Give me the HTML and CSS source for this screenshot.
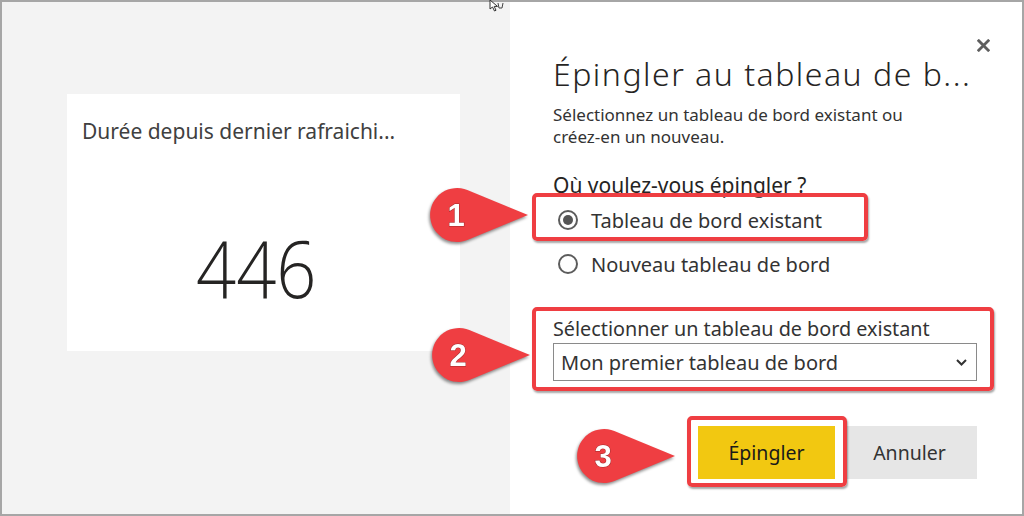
FILE: index.html
```html
<!DOCTYPE html>
<html lang="fr">
<head>
<meta charset="utf-8">
<title>Épingler au tableau de bord</title>
<link rel="stylesheet" href="styles.css">
</head>
<body>
<div class="frame">
  <div class="canvas">
    <div class="card">
      <div class="card-title">Durée depuis dernier rafraichi...</div>
      <div class="card-value">446</div>
    </div>
  </div>
  <div class="dialog">
    <div class="close-row">
      <svg class="close" width="13" height="13" viewBox="0 0 13 13"><path d="M1.8 1.8 L11.2 11.2 M11.2 1.8 L1.8 11.2" stroke="#5f5f5f" stroke-width="2.8" stroke-linecap="square"/></svg>
    </div>
    <h1 class="title">Épingler au tableau de b...</h1>
    <p class="subtitle">Sélectionnez un tableau de bord existant ou<br>créez-en un nouveau.</p>
    <div class="question">Où voulez-vous épingler ?</div>
    <div class="radio-list">
      <div class="radio"><span class="dot checked"></span><span>Tableau de bord existant</span></div>
      <div class="radio"><span class="dot"></span><span>Nouveau tableau de bord</span></div>
    </div>
    <div class="field">
      <div class="field-label">Sélectionner un tableau de bord existant</div>
      <div class="select">
        <span>Mon premier tableau de bord</span>
        <svg class="chevron" width="11" height="7" viewBox="0 0 11 7"><path d="M1 1 L5.5 5.5 L10 1" fill="none" stroke="#333" stroke-width="2"/></svg>
      </div>
    </div>
    <div class="actions">
      <div class="btn primary">Épingler</div>
      <div class="btn secondary">Annuler</div>
    </div>
  </div>

  <div class="hl hl1"></div>
  <div class="hl hl2"></div>
  <div class="hl hl3"></div>

  <svg class="callout c1" width="106" height="66" viewBox="0 0 106 66"><path d="M40.3 7 L101 32 L40.3 57 A27 27 0 1 1 40.3 7 Z" fill="#ef3e42"/><text x="29" y="43" class="num">1</text></svg>
  <svg class="callout c2" width="106" height="66" viewBox="0 0 106 66"><path d="M40.3 7 L101 32 L40.3 57 A27 27 0 1 1 40.3 7 Z" fill="#ef3e42"/><text x="29" y="43" class="num">2</text></svg>
  <svg class="callout c3" width="106" height="66" viewBox="0 0 106 66"><path d="M40.3 7 L101 32 L40.3 57 A27 27 0 1 1 40.3 7 Z" fill="#ef3e42"/><text x="29" y="43" class="num">3</text></svg>

  <svg class="cursor" width="16" height="12" viewBox="0 0 16 12"><path d="M1 0 L1 9 L3.5 7 L5.5 11 L7 10.3 L5.2 6.4 L8.5 6.4 Z" fill="#fff" stroke="#333" stroke-width="1"/><path d="M9 3 L10 8 L13 8 L14 3" fill="none" stroke="#444" stroke-width="1"/></svg>
</div>
</body>
</html>
```

FILE: styles.css
```css
* { box-sizing: border-box; }
html, body { margin: 0; padding: 0; }
body {
  width: 1024px;
  height: 516px;
  overflow: hidden;
  font-family: "Noto Sans", "Open Sans", "Liberation Sans", sans-serif;
  color: #333;
  background: #fff;
}
.frame {
  position: relative;
  width: 1024px;
  height: 516px;
  border: 2px solid #a6a6a6;
  display: flex;
}
.canvas {
  width: 508px;
  height: 100%;
  background: #f3f3f3;
  padding: 92px 0 0 65px;
}
.card {
  width: 393px;
  height: 257px;
  background: #fff;
  padding: 23px 0 0 15px;
}
.card-title {
  font-size: 21px;
  line-height: 28px;
  color: #404040;
  white-space: nowrap;
}
.card-value {
  font-family: "Open Sans", "Noto Sans", sans-serif;
  font-weight: 300;
  font-size: 80px;
  line-height: 80px;
  color: #252423;
  margin-top: 82px;
  margin-left: 114px;
  transform: scaleX(0.88);
  transform-origin: left center;
}
.dialog {
  flex: 1;
  background: #fff;
  padding: 36px 45px 0 43px;
  display: flex;
  flex-direction: column;
}
.close-row {
  height: 14px;
  display: flex;
  justify-content: flex-end;
  align-items: center;
  margin-right: -13px;
}
.close { display: block; }
.title {
  margin: 2px 0 0 0;
  font-size: 32px;
  line-height: 40px;
  font-weight: 300;
  letter-spacing: 1.5px;
  color: #252423;
  white-space: nowrap;
}
.subtitle {
  margin: 10px 0 0 0;
  font-size: 17px;
  line-height: 22px;
  color: #333;
  white-space: nowrap;
}
.question {
  margin-top: 24px;
  font-size: 21px;
  line-height: 26px;
  color: #252423;
  white-space: nowrap;
}
.radio-list {
  margin-top: 7px;
  display: flex;
  flex-direction: column;
  gap: 14px;
}
.radio {
  height: 30px;
  display: flex;
  align-items: center;
  gap: 13px;
  padding-left: 5px;
  font-size: 20px;
  color: #333;
  white-space: nowrap;
}
.dot {
  width: 20px;
  height: 20px;
  border-radius: 50%;
  border: 2px solid #5c5c5c;
  display: flex;
  align-items: center;
  justify-content: center;
  flex: none;
}
.dot.checked::after {
  content: "";
  width: 10px;
  height: 10px;
  border-radius: 50%;
  background: #555;
}
.field { margin-top: 38px; }
.field-label {
  font-size: 19.8px;
  line-height: 24px;
  color: #333;
  white-space: nowrap;
}
.select {
  margin-top: 2px;
  height: 38px;
  border: 1px solid #8a8a8a;
  display: flex;
  align-items: center;
  justify-content: space-between;
  padding: 0 9px 0 7px;
  font-size: 20px;
  color: #333;
  white-space: nowrap;
}
.chevron { display: block; }
.actions {
  margin-top: 45px;
  display: flex;
  justify-content: flex-end;
  gap: 12px;
}
.btn {
  height: 53px;
  display: flex;
  align-items: center;
  justify-content: center;
  font-size: 19.5px;
}
.btn.primary { width: 137px; background: #f2c811; color: #1a1a1a; }
.btn.secondary { width: 130px; background: #e6e6e6; color: #333; padding-right: 5px; }

.hl {
  position: absolute;
  border: 4px solid #ef3e42;
  border-radius: 5px;
  box-shadow: 1px 2px 2px rgba(0,0,0,0.35), inset 0 0 0 1px rgba(255,255,255,0.2);
}
.hl1 { left: 530px; top: 191px; width: 336px; height: 48px; }
.hl2 { left: 530px; top: 305px; width: 462px; height: 84px; }
.hl3 { left: 685px; top: 414px; width: 160px; height: 71px; }

.callout {
  position: absolute;
  overflow: visible;
  filter: drop-shadow(-1px 2px 1.5px rgba(0,0,0,0.45));
}
.c1 { left: 425px; top: 181px; }
.c2 { left: 427px; top: 321px; }
.c3 { left: 572px; top: 422px; }
.num {
  font-family: "Liberation Sans", Arial, sans-serif;
  font-weight: 700;
  font-size: 31px;
  fill: #fff;
  text-anchor: middle;
  paint-order: stroke;
  stroke: rgba(0,0,0,0.35);
  stroke-width: 1px;
}
.cursor {
  position: absolute;
  left: 487px;
  top: -2px;
}
```
